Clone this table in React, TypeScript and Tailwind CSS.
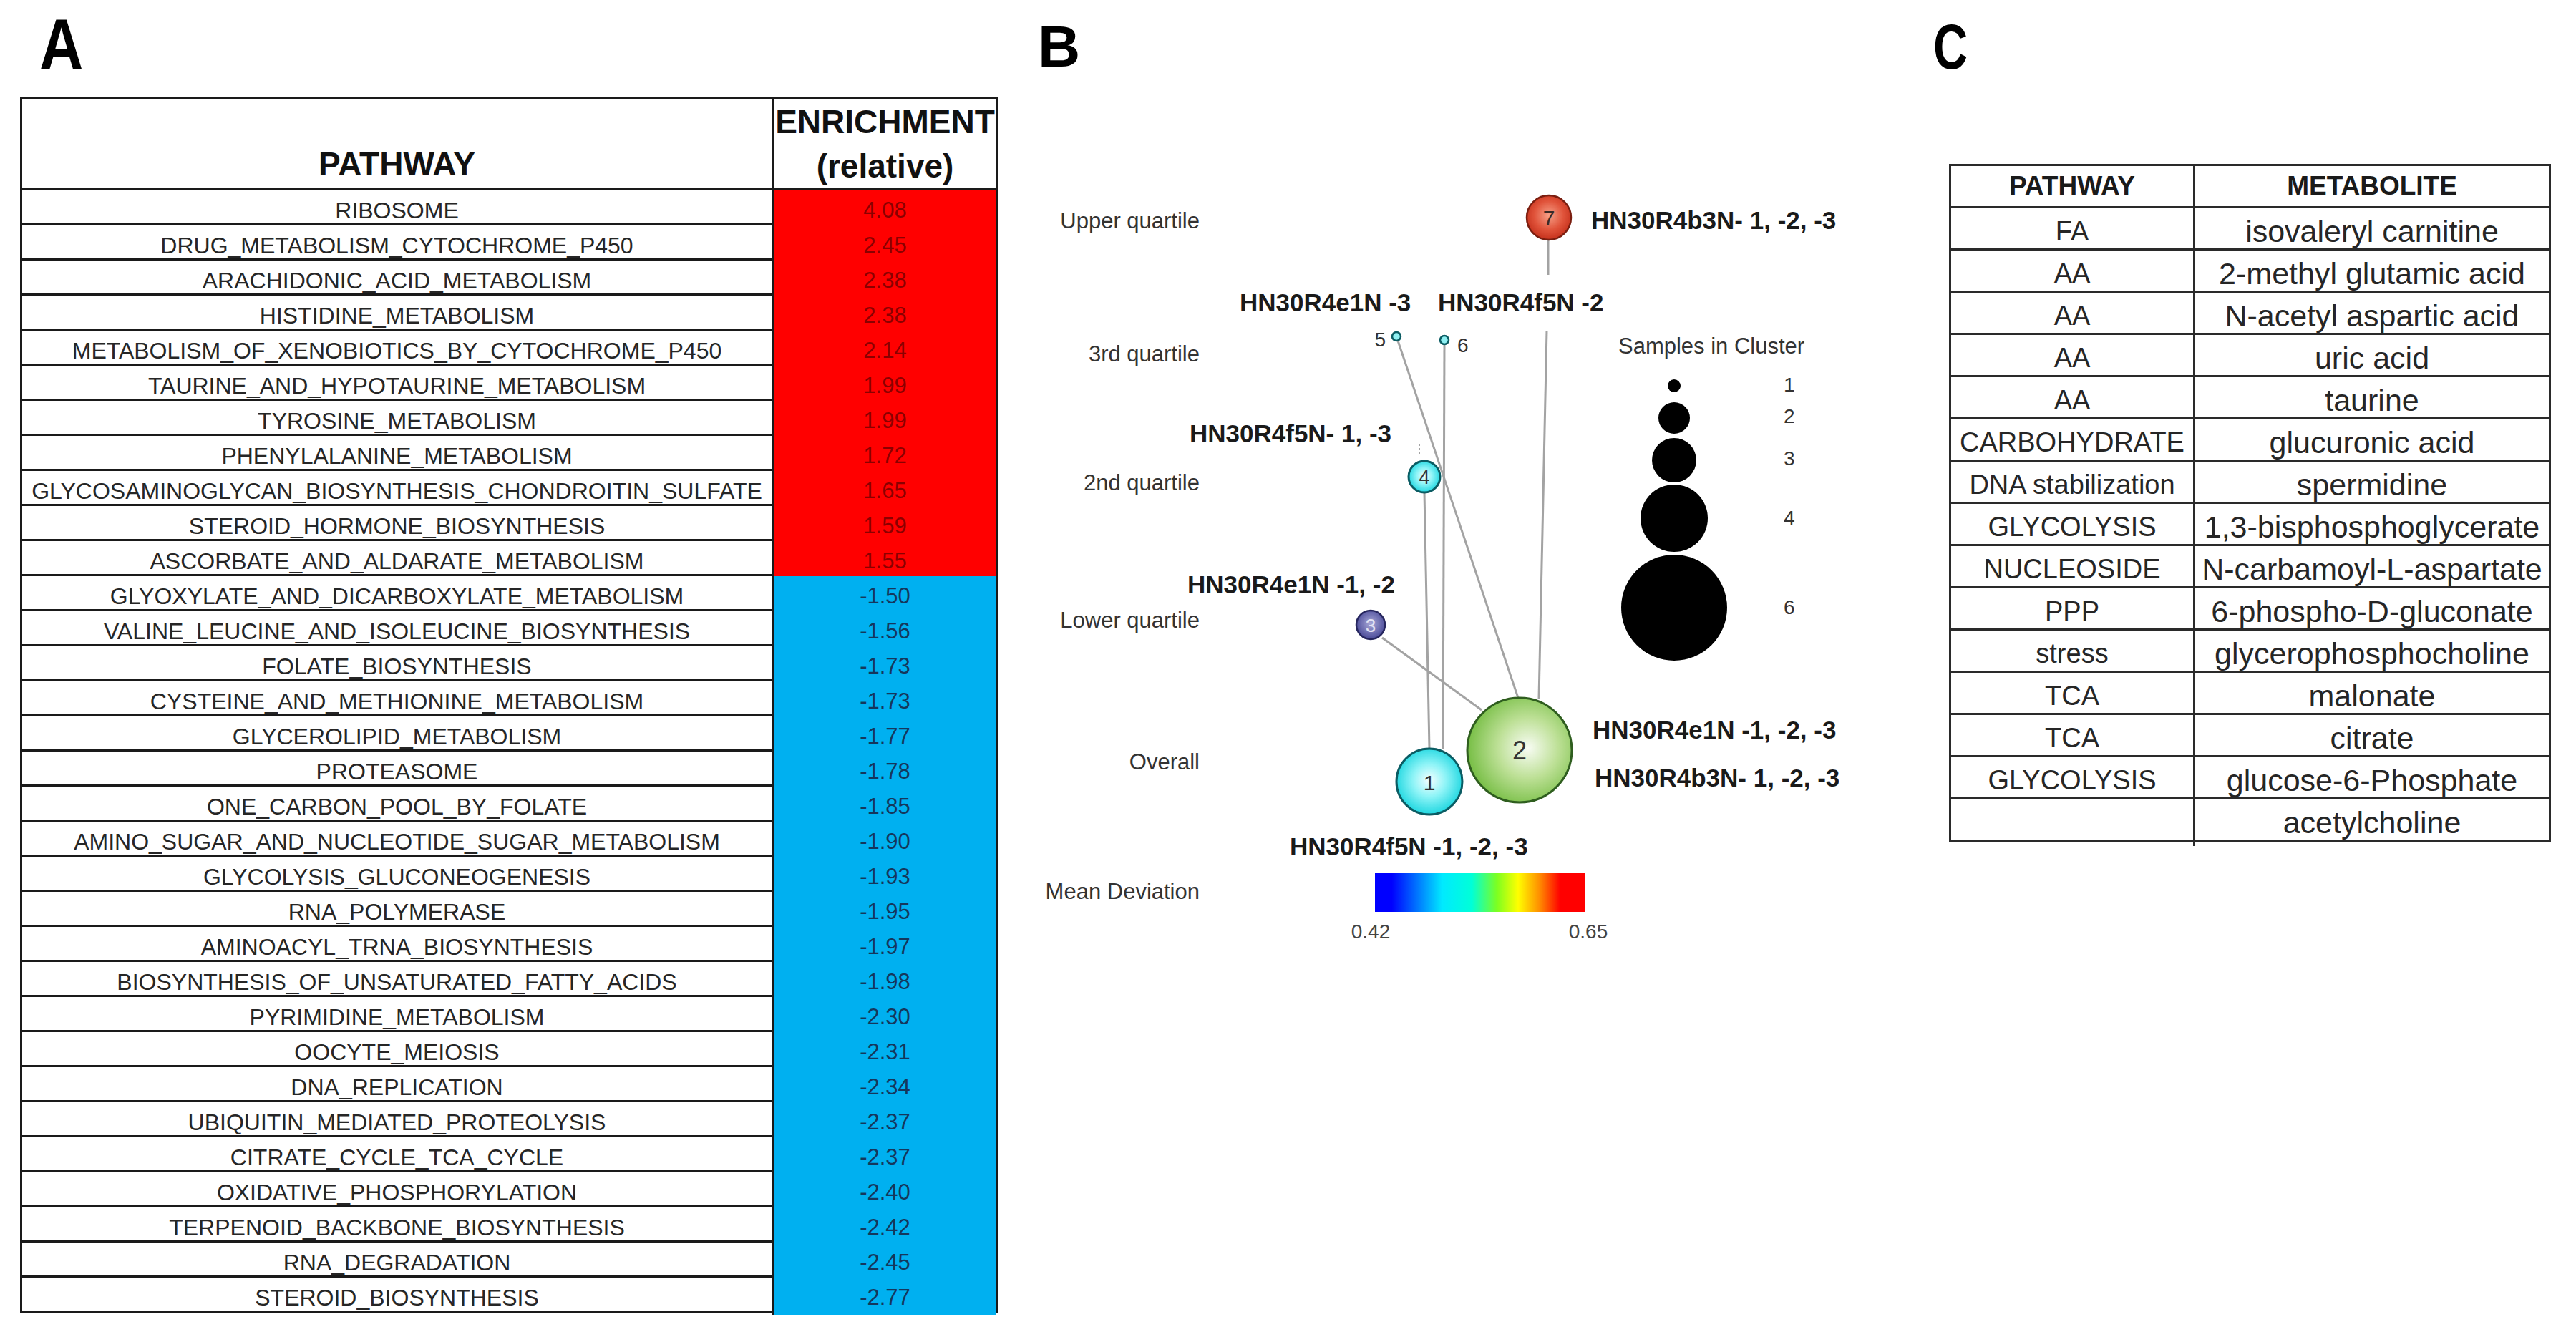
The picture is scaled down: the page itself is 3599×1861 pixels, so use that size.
import React from 'react';

const upRows: [string, string][] = [
    ['RIBOSOME', '4.08'],
    ['DRUG_METABOLISM_CYTOCHROME_P450', '2.45'],
    ['ARACHIDONIC_ACID_METABOLISM', '2.38'],
    ['HISTIDINE_METABOLISM', '2.38'],
    ['METABOLISM_OF_XENOBIOTICS_BY_CYTOCHROME_P450', '2.14'],
    ['TAURINE_AND_HYPOTAURINE_METABOLISM', '1.99'],
    ['TYROSINE_METABOLISM', '1.99'],
    ['PHENYLALANINE_METABOLISM', '1.72'],
    ['GLYCOSAMINOGLYCAN_BIOSYNTHESIS_CHONDROITIN_SULFATE', '1.65'],
    ['STEROID_HORMONE_BIOSYNTHESIS', '1.59'],
    ['ASCORBATE_AND_ALDARATE_METABOLISM', '1.55'],
];

const downRows: [string, string][] = [
    ['GLYOXYLATE_AND_DICARBOXYLATE_METABOLISM', '-1.50'],
    ['VALINE_LEUCINE_AND_ISOLEUCINE_BIOSYNTHESIS', '-1.56'],
    ['FOLATE_BIOSYNTHESIS', '-1.73'],
    ['CYSTEINE_AND_METHIONINE_METABOLISM', '-1.73'],
    ['GLYCEROLIPID_METABOLISM', '-1.77'],
    ['PROTEASOME', '-1.78'],
    ['ONE_CARBON_POOL_BY_FOLATE', '-1.85'],
    ['AMINO_SUGAR_AND_NUCLEOTIDE_SUGAR_METABOLISM', '-1.90'],
    ['GLYCOLYSIS_GLUCONEOGENESIS', '-1.93'],
    ['RNA_POLYMERASE', '-1.95'],
    ['AMINOACYL_TRNA_BIOSYNTHESIS', '-1.97'],
    ['BIOSYNTHESIS_OF_UNSATURATED_FATTY_ACIDS', '-1.98'],
    ['PYRIMIDINE_METABOLISM', '-2.30'],
    ['OOCYTE_MEIOSIS', '-2.31'],
    ['DNA_REPLICATION', '-2.34'],
    ['UBIQUITIN_MEDIATED_PROTEOLYSIS', '-2.37'],
    ['CITRATE_CYCLE_TCA_CYCLE', '-2.37'],
    ['OXIDATIVE_PHOSPHORYLATION', '-2.40'],
    ['TERPENOID_BACKBONE_BIOSYNTHESIS', '-2.42'],
    ['RNA_DEGRADATION', '-2.45'],
    ['STEROID_BIOSYNTHESIS', '-2.77'],
];

const metabolites: [string, string][] = [
    ['FA', 'isovaleryl carnitine'],
    ['AA', '2-methyl glutamic acid'],
    ['AA', 'N-acetyl aspartic acid'],
    ['AA', 'uric acid'],
    ['AA', 'taurine'],
    ['CARBOHYDRATE', 'glucuronic acid'],
    ['DNA stabilization', 'spermidine'],
    ['GLYCOLYSIS', '1,3-bisphosphoglycerate'],
    ['NUCLEOSIDE', 'N-carbamoyl-L-aspartate'],
    ['PPP', '6-phospho-D-gluconate'],
    ['stress', 'glycerophosphocholine'],
    ['TCA', 'malonate'],
    ['TCA', 'citrate'],
    ['GLYCOLYSIS', 'glucose-6-Phosphate'],
    ['', 'acetylcholine'],
];

const FONT = 'Liberation Sans, Arial, sans-serif';

const EnrichmentTable: React.FC = () => (
    <div className="border-[3px] border-[#1a1a1a] w-[1367px]">
        {/* header */}
        <div className="grid grid-cols-[1047px_314px] h-[125px]">
            <div className="flex items-end justify-center pb-[3px] text-[46px] font-bold leading-[62px] text-[#111]">
                PATHWAY
            </div>
            <div className="border-l-[3px] border-[#1a1a1a] flex flex-col items-center justify-end text-[46px] font-bold leading-[62px] text-[#111]">
                <span>ENRICHMENT</span>
                <span>(relative)</span>
            </div>
        </div>
        {upRows.map(([name, value]) => (
            <div key={name} className="grid grid-cols-[1047px_314px] h-[49px] border-t-[3px] border-[#1a1a1a]">
                <div className="flex items-center justify-center pt-[4px] whitespace-nowrap text-[32px] text-[#262626]">{name}</div>
                <div className="border-l-[3px] border-[#1a1a1a] bg-[#ff0000] flex items-center justify-center pt-[4px] text-[31px] text-[#8a0000]">
                    {value}
                </div>
            </div>
        ))}
        {downRows.map(([name, value]) => (
            <div key={name} className="grid grid-cols-[1047px_314px] h-[49px] border-t-[3px] border-[#1a1a1a]">
                <div className="flex items-center justify-center pt-[4px] whitespace-nowrap text-[32px] text-[#262626]">{name}</div>
                <div className="border-l-[3px] border-[#1a1a1a] bg-[#00b0f0] flex items-center justify-center pt-[4px] text-[31px] text-[#15375c]">
                    {value}
                </div>
            </div>
        ))}
    </div>
);

const MetaboliteTable: React.FC = () => (
    <div className="border-[3px] border-[#2a2a2a] w-[841px]">
        <div className="grid grid-cols-[338px_497px] h-[56px] text-[37px] font-bold text-[#1a1a1a]">
            <div className="flex items-center justify-center">PATHWAY</div>
            <div className="border-l-[3px] border-[#2a2a2a] flex items-center justify-center">METABOLITE</div>
        </div>
        {metabolites.map(([pathway, metabolite], i) => (
            <div key={i} className="grid grid-cols-[338px_497px] h-[59px] border-t-[3px] border-[#2a2a2a] text-[#262626]">
                <div className="flex items-center justify-center whitespace-nowrap text-[38px]">{pathway}</div>
                <div className="border-l-[3px] border-[#2a2a2a] flex items-center justify-center whitespace-nowrap text-[43px]">
                    {metabolite}
                </div>
            </div>
        ))}
    </div>
);

const NetworkChart: React.FC = () => {
    const grey = '#333333';
    const line = '#a3a3a3';
    return (
        <svg width={1260} height={1400} viewBox="1420 0 1260 1400" fontFamily={FONT}>
            <defs>
                <radialGradient id="gRed" cx="50%" cy="45%" r="55%">
                    <stop offset="0%" stopColor="#f6a088" />
                    <stop offset="60%" stopColor="#e0533a" />
                    <stop offset="100%" stopColor="#c5311c" />
                </radialGradient>
                <radialGradient id="gCyan" cx="50%" cy="48%" r="55%">
                    <stop offset="0%" stopColor="#f4ffff" />
                    <stop offset="45%" stopColor="#8ff4f7" />
                    <stop offset="100%" stopColor="#14d4de" />
                </radialGradient>
                <radialGradient id="gGreen" cx="58%" cy="48%" r="58%">
                    <stop offset="0%" stopColor="#f8fcf4" />
                    <stop offset="50%" stopColor="#bde096" />
                    <stop offset="100%" stopColor="#77be45" />
                </radialGradient>
                <radialGradient id="gPurple" cx="50%" cy="45%" r="55%">
                    <stop offset="0%" stopColor="#a8a8d8" />
                    <stop offset="100%" stopColor="#4a4a98" />
                </radialGradient>
                <linearGradient id="gBar" x1="0" x2="1" y1="0" y2="0">
                    <stop offset="0%" stopColor="#0000ff" />
                    <stop offset="8%" stopColor="#0000ff" />
                    <stop offset="32%" stopColor="#00eaff" />
                    <stop offset="46%" stopColor="#00ffd8" />
                    <stop offset="58%" stopColor="#7dff20" />
                    <stop offset="68%" stopColor="#ffff00" />
                    <stop offset="78%" stopColor="#ff9000" />
                    <stop offset="88%" stopColor="#ff0000" />
                    <stop offset="100%" stopColor="#ff0000" />
                </linearGradient>
            </defs>

            <text x={1450} y={93} fontSize={82} fontWeight="bold" fill="#000">B</text>

            {/* row labels */}
            <g fontSize={31} fill={grey} textAnchor="end">
                <text x={1676} y={319}>Upper quartile</text>
                <text x={1676} y={505}>3rd quartile</text>
                <text x={1676} y={685}>2nd quartile</text>
                <text x={1676} y={877}>Lower quartile</text>
                <text x={1676} y={1075}>Overall</text>
                <text x={1676} y={1256}>Mean Deviation</text>
            </g>

            {/* edges */}
            <g stroke={line} strokeWidth={3} fill="none">
                <line x1={2163} y1={336} x2={2163} y2={384} />
                <line x1={2161} y1={462} x2={2150} y2={976} />
                <line x1={1953} y1={476} x2={2121} y2={975} />
                <line x1={2018} y1={481} x2={2016} y2={1046} />
                <line x1={1990} y1={688} x2={1997} y2={1046} />
                <line x1={1931} y1={891} x2={2070} y2={992} />
                <line x1={1983} y1={620} x2={1983} y2={634} strokeWidth={2} strokeDasharray="3 3" />
            </g>

            {/* nodes */}
            <circle cx={2164} cy={304} r={31} fill="url(#gRed)" stroke="#7a1e10" strokeWidth={2.5} />
            <text x={2164} y={315} fontSize={30} textAnchor="middle" fill="#3a2a26">7</text>

            <circle cx={1951} cy={470} r={6} fill="#8ff0f2" stroke="#0b5c63" strokeWidth={2.5} />
            <text x={1936} y={484} fontSize={28} textAnchor="end" fill={grey}>5</text>
            <circle cx={2018} cy={475} r={6} fill="#8ff0f2" stroke="#0b5c63" strokeWidth={2.5} />
            <text x={2036} y={492} fontSize={28} fill={grey}>6</text>

            <circle cx={1990} cy={666} r={22} fill="url(#gCyan)" stroke="#0b5c63" strokeWidth={3} />
            <text x={1990} y={676} fontSize={27} textAnchor="middle" fill="#333">4</text>

            <circle cx={1915} cy={873} r={20} fill="url(#gPurple)" stroke="#26265e" strokeWidth={2.5} />
            <text x={1915} y={883} fontSize={26} textAnchor="middle" fill="#e4e4f4">3</text>

            <circle cx={2123} cy={1048} r={73} fill="url(#gGreen)" stroke="#2f5e1f" strokeWidth={3} />
            <text x={2123} y={1061} fontSize={36} textAnchor="middle" fill="#333">2</text>

            <circle cx={1997} cy={1092} r={46} fill="url(#gCyan)" stroke="#0b5c63" strokeWidth={3} />
            <text x={1997} y={1104} fontSize={30} textAnchor="middle" fill="#333">1</text>

            {/* sample labels */}
            <g fontSize={35} fontWeight="bold" fill="#1a1a1a">
                <text x={2223} y={320}>HN30R4b3N- 1, -2, -3</text>
                <text x={1732} y={435}>HN30R4e1N -3</text>
                <text x={2009} y={435}>HN30R4f5N -2</text>
                <text x={1662} y={618}>HN30R4f5N- 1, -3</text>
                <text x={1659} y={829}>HN30R4e1N -1, -2</text>
                <text x={2225} y={1032}>HN30R4e1N -1, -2, -3</text>
                <text x={2228} y={1099}>HN30R4b3N- 1, -2, -3</text>
                <text x={1802} y={1195}>HN30R4f5N -1, -2, -3</text>
            </g>

            {/* legend */}
            <text x={2261} y={494} fontSize={31} fill={grey}>Samples in Cluster</text>
            <g fill="#000">
                <circle cx={2339} cy={539} r={9} />
                <circle cx={2339} cy={584} r={22} />
                <circle cx={2339} cy={643} r={31} />
                <circle cx={2339} cy={724} r={47} />
                <circle cx={2339} cy={849} r={74} />
            </g>
            <g fontSize={28} fill={grey}>
                <text x={2492} y={547}>1</text>
                <text x={2492} y={591}>2</text>
                <text x={2492} y={650}>3</text>
                <text x={2492} y={733}>4</text>
                <text x={2492} y={858}>6</text>
            </g>

            {/* colour scale */}
            <rect x={1921} y={1220} width={294} height={54} fill="url(#gBar)" />
            <g fontSize={28} fill="#444" textAnchor="middle">
                <text x={1915} y={1311}>0.42</text>
                <text x={2219} y={1311}>0.65</text>
            </g>
        </svg>
    );
};

export default function App() {
    return (
        <div className="w-[3599px] h-[1861px] bg-white flex font-['Liberation_Sans',Arial,sans-serif] overflow-hidden">
            {/* Panel A */}
            <div className="w-[1420px] pl-[28px] shrink-0">
                <div className="pt-[12px] h-[112px] pl-[27px]">
                    <div className="inline-block origin-left scale-x-[0.85] text-[100px] font-bold leading-none text-black">A</div>
                </div>
                <div className="mt-[23px]">
                    <EnrichmentTable />
                </div>
            </div>

            {/* Panel B */}
            <div className="w-[1260px] shrink-0">
                <NetworkChart />
            </div>

            {/* Panel C */}
            <div className="flex-1 pl-[21px]">
                <div className="pt-[21px] h-[110px]">
                    <div className="inline-block origin-left scale-x-[0.75] text-[89px] font-bold leading-none text-black">C</div>
                </div>
                <div className="mt-[119px] ml-[22px]">
                    <MetaboliteTable />
                </div>
            </div>
        </div>
    );
}
